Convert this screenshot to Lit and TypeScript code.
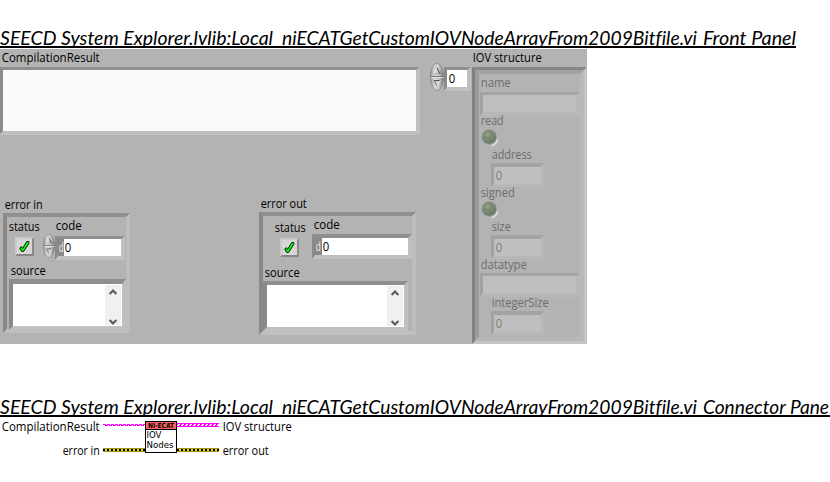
import { LitElement, html, svg, css } from "lit";
import { customElement } from "lit/decorators.js";

/* A line of text set to a fixed advance width; the baseline sits 4px above the bottom. */
const label = (text: string, width: number, height = 17, cls = "") => html`
  <svg class="label ${cls}" width=${width} height=${height}>
    <text x="-.3" y=${height - 4} textLength=${width} lengthAdjust="spacingAndGlyphs">${text}</text>
  </svg>`;

const heading = (parts: [string, number, number, number?][], lineWidth: number) => html`
  <svg class="heading" width="830" height="24">
    ${parts.map(([t, x, w, y]) => svg`<text x=${x} y=${y ?? 20.6} textLength=${w} lengthAdjust="spacingAndGlyphs">${t}</text>`)}
    <rect x="0" y="22" width=${lineWidth} height="2" />
  </svg>`;

const spinner = (w: number, h: number) => html`
  <svg class="spinner" width=${w} height=${h} viewBox="0 0 14 28" preserveAspectRatio="none">
    <defs>
      <linearGradient id="metal" x1="0" x2="1" y1="0" y2="0">
        <stop offset="0" stop-color="#929292" /><stop offset=".3" stop-color="#d6d6d6" />
        <stop offset=".65" stop-color="#c6c6c6" /><stop offset="1" stop-color="#747474" />
      </linearGradient>
    </defs>
    <ellipse cx="7" cy="14" rx="6.6" ry="13.6" fill="url(#metal)" stroke="#858585" stroke-width=".8" />
    <path d="M.6 13.5H13.4" stroke="#777" />
    <path d="M.8 14.6H13.2" stroke="#e2e2e2" />
    <path d="M4 11L7 5" fill="none" stroke="#eee" /><path d="M7 5L10 11" fill="none" stroke="#444" />
    <path d="M4 10.8H9" stroke="#999" stroke-width=".7" />
    <path d="M4 17.5H10" stroke="#555" /><path d="M4 17.5L7 23" fill="none" stroke="#777" /><path d="M7 23L10 17.5" fill="none" stroke="#eee" />
  </svg>`;

const led = () => html`
  <svg class="led" width="20" height="17" viewBox="0 0 20 17">
    <defs>
      <radialGradient id="bulb" cx=".38" cy=".32" r=".7">
        <stop offset="0" stop-color="#95a48e" /><stop offset=".3" stop-color="#7f8f78" />
        <stop offset="1" stop-color="#6c7a64" />
      </radialGradient>
    </defs>
    <path d="M17.6 10A8 8 0 0 1 11 16.6" fill="none" stroke="#dcdcdc" stroke-width="1.8" />
    <circle cx="9.2" cy="8" r="8" fill="#a6a6a6" />
    <circle cx="9.2" cy="8" r="7.2" fill="#8f8f8f" />
    <circle cx="9.2" cy="8" r="6.8" fill="url(#bulb)" />
  </svg>`;

const check = () => html`
  <div class="check">
    <svg width="13" height="13" viewBox="0 0 13 13">
      <path d="M1.7 8L3.5 6.6L4.6 8.4L8.8 1.5H10.8V3.4L5.6 11.4H3.6Z" fill="#0f0" stroke="#000" stroke-width=".9" />
    </svg>
  </div>`;

const scrollbar = () => html`
  <svg class="scroll" width="16" height="40" viewBox="0 0 16 40">
    <rect width="16" height="40" fill="#f0f0f0" />
    <path d="M4.6 9L8 5.5L11.4 9" fill="none" stroke="#5a5a5a" stroke-width="2.1" />
    <path d="M4.6 35L8 38.5L11.4 35" fill="none" stroke="#5a5a5a" stroke-width="2.1" />
  </svg>`;

const numeric = (cls: string, radix = false) => html`
  <div class="bevel numeric ${cls}">
    ${radix ? html`<div class="radix">${label("d", 5, 17)}</div>` : ""}
    <div class="value">${label("0", 6.5, 17)}</div>
  </div>`;

@customElement("app-root")
export class AppRoot extends LitElement {
  static styles = css`
    :host { display: block; width: 830px; height: 482px; background: #fff; overflow: hidden; }
    * { box-sizing: border-box; }
    svg { display: block; flex: none; overflow: visible; }
    .label text { font: 12.2px "Open Sans", "Noto Sans", sans-serif; fill: #000; }
    .heading text { font: italic 18.3px Lato, Carlito, sans-serif; font-variant-ligatures: none; fill: #000; }
    .first { padding-top: 24px; }
    .second { padding-top: 49px; }

    .panel { display: flex; width: 587px; height: 295px; margin-top: 1px; background: #b3b3b3; overflow: hidden; }
    .main { width: 430px; flex: none; }
    .index { width: 41px; flex: none; display: flex; padding-top: 14px; }
    .index .numeric { width: 27px; margin-top: 4px; }
    .structure { width: 116px; flex: none; }
    .pad1 { padding-left: 1.5px; }

    .bevel { border: 4px solid; border-color: #8f8f8f #bfbfbf #c0c0c0 #8a8a8a; }
    .result { width: 421px; height: 68px; margin: 1px 0 0 -1px; border-top-width: 3px; background: #fafafa; }

    .numeric { height: 24px; display: flex; background: #fff; border-width: 3px 4px 4px 3px; flex: none; }
    .radix { width: 6px; background: #888; padding-left: 1px; }
    .radix text { fill: #eee; }
    .value { padding-left: 1.5px; }
    .index .value { padding-left: 2px; }

    .errors { display: flex; align-items: flex-start; }
    .error { flex: none; }
    .error-in { width: 127px; margin: 61px 0 0 3px; }
    .error-out { width: 157px; margin: 60px 0 0 129px; }
    .caption { padding-left: 1.5px; }
    .cluster { border-color: #8f8f8f #bdbdbd #c0c0c0 #898989; }
    .error-in .cluster { height: 120px; }
    .error-out .cluster { height: 123px; }
    .controls { display: flex; align-items: flex-start; }
    .check { width: 19px; height: 19px; border: 2px solid; border-color: #c9c9c9 #8b8b8b #858585 #c9c9c9; background: #d6d6d6; display: flex; padding: 1px; }
    .error-in .status { width: 36px; padding-left: 1.5px; }
    .error-in .check { margin: 2px 0 0 6.5px; }
    .code-caption { padding-left: 12.5px; }
    .entry { display: flex; }
    .error-in .numeric { width: 70px; margin-top: 2px; }
    .error-out .status { width: 49px; padding: 2px 0 0 11.5px; }
    .error-out .check { margin: 2px 0 0 5.5px; }
    .error-out .code-caption { padding-left: 1.5px; }
    .error-out .numeric { width: 100px; margin-top: 1px; height: 25px; border-width: 4px 4px 4px 3px; }
    .error .value { padding-left: 1px; }
    .error-out .radix { width: 7px; }
    .source-caption { padding-left: 3.5px; margin-top: 2px; }
    .error-out .source-caption { padding-left: 1.5px; margin-top: 5px; }
    .source { display: flex; justify-content: flex-end; background: #fff; padding: 1px; }
    .error-in .source { width: 117px; height: 51px; margin-left: 2px; border-top-width: 5px; }
    .error-out .source { width: 145px; height: 50px; }

    .outer { height: 277px; margin: 1px 0 0 1px; border-width: 3px; border-color: #868686 #c3c3c3 #c4c4c4 #818181; }
    .inner { height: 100%; border-width: 4px; border-color: #a1a1a1 #b9b9b9 #b7b7b7 #9c9c9c; padding: 1px 0 0 1px; }
    .faded .label text { fill: #6e6e6e; }
    .faded .value .label text { fill: #85796c; }
    .faded .field, .faded .numeric { background: #bfbfbf; border-color: #a3a3a3 #b8b8b8 #b8b8b8 #a1a1a1; }
    .field { width: 100px; height: 24px; border-width: 3px 4px 4px 3px; }
    .name { margin-bottom: 2px; }
    .faded .name, .faded > .label { margin-left: .6px; }
    .name { padding-top: 1px; margin-bottom: 1px; }
    .nest { margin-left: 11px; }
    .nest > .label { margin-left: .5px; }
    .faded .numeric { width: 53px; border-width: 4px 3px 3px; }
    .faded .numeric .value { padding-left: 2px; }

    .connector { display: grid; grid-template-columns: 103px 42px 32px 42px 100px; height: 36px; margin-top: 4px; }
    .left { display: flex; flex-direction: column; align-items: flex-end; padding-right: 3.5px; gap: 7px; margin-top: -3px; }
    .right { display: flex; flex-direction: column; align-items: flex-start; padding-left: 3.5px; gap: 7px; margin-top: -3px; }
    .vi .title { font: bold 7px "DejaVu Sans", sans-serif; }
    .vi .iov { font: 8.4px "DejaVu Sans", sans-serif; }
    .vi .nodes { font: 9.4px "DejaVu Sans", sans-serif; }
  `;

  private error(cls: string, title: string, w: number, withSpinner: boolean) {
    return html`
      <div class="error ${cls}">
        <div class="caption">${label(title, w)}</div>
        <div class="bevel cluster">
          <div class="controls">
            <div class="status">${label("status", 31, 18)}${check()}</div>
            <div class="code">
              <div class="code-caption">${label("code", 26)}</div>
              <div class="entry">
                ${withSpinner ? spinner(12, 24) : ""}${numeric("", true)}
              </div>
            </div>
          </div>
          <div class="source-caption">${label("source", 35)}</div>
          <div class="bevel source">${scrollbar()}</div>
        </div>
      </div>`;
  }

  private wires(kind: "left" | "right") {
    return html`
      <svg width="42" height="32" shape-rendering="crispEdges">
        ${kind === "left"
          ? svg`<path d="M0 3.5H42" stroke="#f0f" stroke-dasharray="3 1" /><path d="M2 4.5H42" stroke="#f0f" stroke-dasharray="3 1" />`
          : svg`<rect y="2" width="42" height="4" fill="#f0f" /><path d="M1 3.5H42" stroke="#fff" stroke-dasharray="2 2" /><path d="M0 4.5H42" stroke="#fff" stroke-dasharray="2 2" />`}
        <rect y="27" width="42" height="4" fill="#a0960a" />
        <rect y="28" width="42" height="2" fill="#e6dc28" />
        <path d="M0 29H42" stroke="#000" stroke-width="2" stroke-dasharray="2 2" />
      </svg>`;
  }

  render() {
    return html`
      <div class="first">
        ${heading([
          ["SEECD System Explorer.lvlib:Local", 0, 273],
          ["_", 273, 9, 19.6],
          ["niECATGetCustomIOVNodeArrayFrom2009Bitfile.vi", 282, 415],
          ["Front Panel", 703, 93],
        ], 796)}
      </div>
      <div class="panel">
        <div class="main">
          <div class="pad1">${label("CompilationResult", 98)}</div>
          <div class="bevel result"></div>
          <div class="errors">
            ${this.error("error-in", "error in", 38, true)}
            ${this.error("error-out", "error out", 46, false)}
          </div>
        </div>
        <div class="index">${spinner(14, 28)}${numeric("")}</div>
        <div class="structure">
          <div class="pad1">${label("IOV structure", 69)}</div>
          <div class="bevel outer">
            <div class="bevel inner faded">
              <div class="name">${label("name", 30, 15)}</div>
              <div class="bevel field"></div>
              ${label("read", 23, 13)}
              ${led()}
              <div class="nest">${label("address", 40, 17)}${numeric("")}</div>
              ${label("signed", 34, 14)}
              ${led()}
              <div class="nest">${label("size", 19, 17)}${numeric("")}</div>
              ${label("datatype", 46, 14)}
              <div class="bevel field"></div>
              <div class="nest">${label("integerSize", 57, 14)}${numeric("")}</div>
            </div>
          </div>
        </div>
      </div>
      <div class="second">
        ${heading([
          ["SEECD System Explorer.lvlib:Local", 0, 273],
          ["_", 273, 9, 19.6],
          ["niECATGetCustomIOVNodeArrayFrom2009Bitfile.vi", 282, 415],
          ["Connector Pane", 703, 126],
        ], 830)}
      </div>
      <div class="connector">
        <div class="left">${label("CompilationResult", 98)}${label("error in", 37)}</div>
        ${this.wires("left")}
        <svg class="vi" width="32" height="32">
          <rect x=".5" y=".5" width="31" height="31" fill="#fff" stroke="#000" />
          <rect x="1" y="1" width="30" height="7" fill="#ff6464" />
          <rect x="1" y="8" width="30" height="1" fill="#000" />
          <text class="title" x="3" y="7" textLength="26" lengthAdjust="spacingAndGlyphs">NI-ECAT</text>
          <text class="iov" x="1.5" y="16.6" textLength="15" lengthAdjust="spacingAndGlyphs">IOV</text>
          <text class="nodes" x="1.5" y="27" textLength="27" lengthAdjust="spacingAndGlyphs">Nodes</text>
        </svg>
        ${this.wires("right")}
        <div class="right">${label("IOV structure", 69)}${label("error out", 46)}</div>
      </div>`;
  }
}
